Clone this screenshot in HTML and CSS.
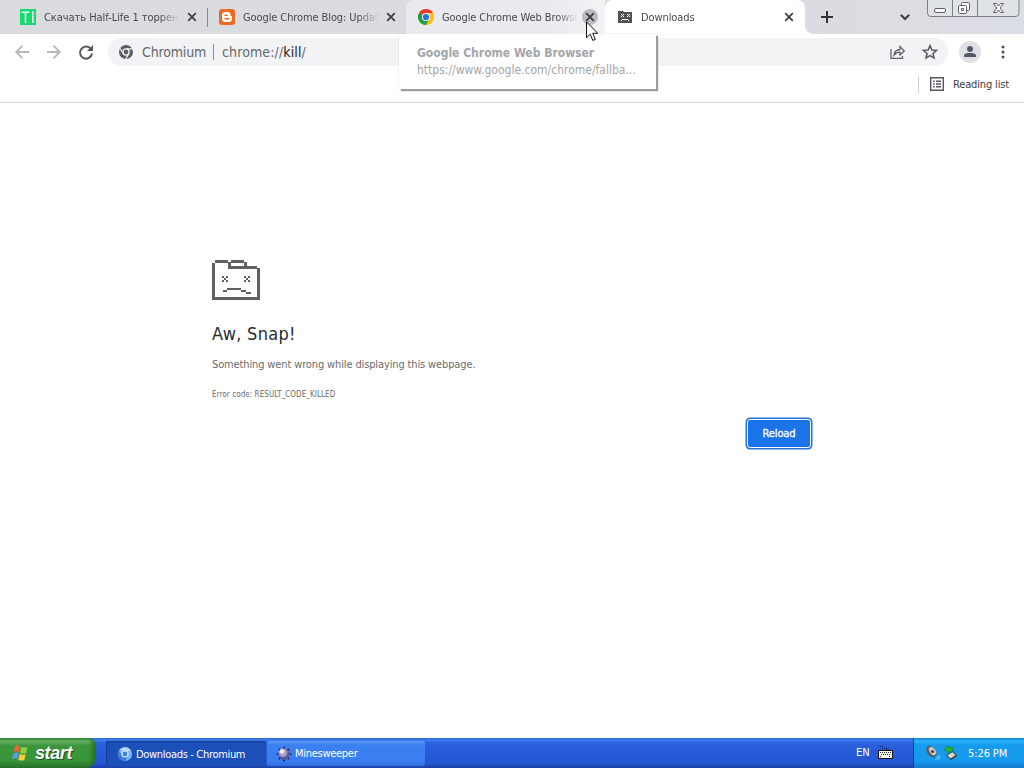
FILE: index.html
```html
<!DOCTYPE html>
<html lang="en">
<head>
<meta charset="utf-8">
<title>Downloads - Chromium</title>
<link rel="stylesheet" href="styles.css">
</head>
<body>
<header class="tabstrip">
  <div class="tab sep">
    <svg class="fav" viewBox="0 0 16 16"><path fill="#17d96f" d="M0 0h16v16H0z"/><path fill="none" stroke="#e9fff2" stroke-width="1.6" d="M1.500 3.200h8M5.500 3v11M12.800 2v12"/></svg>
    <span class="title t1">Скачать Half-Life 1 торрент</span>
    <svg class="x" viewBox="0 0 10 10"><path d="M1.200 1.200l7.600 7.600M8.800 1.200L1.200 8.800"/></svg>
  </div>
  <div class="tab">
    <svg class="fav" viewBox="0 0 16 16"><rect width="16" height="16" rx="3" fill="#ee6a1f"/><path fill="#fff" d="M6 3h2.500C10.500 3 11.500 4.300 11.500 6c0 .8.300 1 .8 1 .5 0 .7.300.7.800V10c0 2-1.200 3-3 3H6c-1.800 0-3-1.200-3-3V6c0-1.800 1.200-3 3-3z"/><path stroke="#ee6a1f" stroke-width="1.400" stroke-linecap="round" d="M6 6.200h2.200M6 9.800h4"/></svg>
    <span class="title t2">Google Chrome Blog: Update</span>
    <svg class="x" viewBox="0 0 10 10"><path d="M1.200 1.200l7.600 7.600M8.800 1.200L1.200 8.800"/></svg>
  </div>
  <div class="tab hover">
    <svg class="fav" viewBox="0 0 16 16"><circle cx="8" cy="8" r="8" fill="#fbc116"/><path fill="#e33b2e" d="M8 8L1.070 4A8 8 0 0 1 14.930 4z"/><path fill="#229b4b" d="M8 8L1.070 4A8 8 0 0 0 8 16l3.500-6z"/><path fill="#fbc116" d="M8 4h6.930A8 8 0 0 1 8 16l3.500-6z"/><circle cx="8" cy="8" r="4" fill="#fff"/><circle cx="8" cy="8" r="3.100" fill="#2b70e4"/></svg>
    <span class="title t3">Google Chrome Web Browser</span>
    <i class="disc"><svg class="x" viewBox="0 0 10 10"><path d="M1.200 1.200l7.600 7.600M8.800 1.200L1.200 8.800"/></svg></i>
    <svg class="cursor" viewBox="0 0 12 21"><path fill="#fff" stroke="#111" d="M.5.8v16l3.700-3.600 2.600 6.200 2.500-1-2.600-6.100h5z"/></svg>
  </div>
  <div class="tab active">
    <svg class="fav" viewBox="0 0 16 16"><path fill="#505357" d="M1 2h5l1 1h8v11H1z"/><path fill="#fff" d="M4 5h1v1H4zM6 5h1v1H6zM5 6h1v1H5zM4 7h1v1H4zM6 7h1v1H6zM10 5h1v1h-1zM12 5h1v1h-1zM11 6h1v1h-1zM10 7h1v1h-1zM12 7h1v1h-1zM5 10h6v1H5zM4 11h1v1H4zM11 11h1v1h-1z"/></svg>
    <span class="title t4">Downloads</span>
    <svg class="x" viewBox="0 0 10 10"><path d="M1.200 1.200l7.600 7.600M8.800 1.200L1.200 8.800"/></svg>
  </div>
  <svg class="plus" viewBox="0 0 12 12"><path d="M6 0v12M0 6h12"/></svg>
  <svg class="chev" viewBox="0 0 10 6"><path d="M.8.800L5 5 9.200.800"/></svg>
  <svg class="winbtns" viewBox="0 0 93 18"><path fill="#dfe2e7" stroke="#7b7e82" d="M.5-1v14q0 3.500 3.500 3.500h84.500q3.500 0 3.500-3.500V-1M25.500 0v16M50.500 0v16"/><g fill="#f5f6f8" stroke="#5f6266"><rect x="7.500" y="8.500" width="11" height="4" rx="1.500"/><path d="M34.500 3.500q0-1 1-1h6q1 0 1 1v6q0 1-1 1h-6q-1 0-1-1z"/><rect x="31.500" y="5.500" width="8" height="8" rx="1"/><path d="M34.500 8.500h2v2h-2zM66.500 3.500h3l2 2.500 2-2.500h3l-3.300 4.500 3.300 4.500h-3l-2-2.500-2 2.500h-3l3.300-4.500z"/></g></svg>
</header>

<nav class="toolbar">
  <svg class="nav back" viewBox="0 0 14 14"><path d="M14 7H1.500M7.500.7L1.200 7l6.300 6.300"/></svg>
  <svg class="nav fwd" viewBox="0 0 14 14"><path d="M0 7h12.500M6.500.7L12.800 7l-6.300 6.300"/></svg>
  <svg class="nav reload-i" viewBox="0 0 14 14"><path d="M12 4.200A6 6 0 1 0 13 8.500"/><path class="fill" d="M14 0v6H8z"/></svg>
  <div class="omnibox">
    <svg class="chip" viewBox="0 0 14 14"><circle cx="7" cy="7" r="7" fill="#5a5d61"/><circle cx="7" cy="7" r="3.100" fill="none" stroke="#f1f3f4" stroke-width="1.300"/><path stroke="#f1f3f4" stroke-width="1.200" d="M7 3.800h7M4.200 8.500L.9 3.200M9.800 8.600L6.700 14"/></svg>
    <span class="chiptext">Chromium</span>
    <span class="bar"></span>
    <span class="url">chrome://<b>kill</b>/</span>
    <svg class="share" viewBox="0 0 16 14"><path d="M1 4v9.300h11.500V11M4 10c.5-3.600 2.600-5.300 6-5.500V1.500L14.300 6 10 10V7.200C7.500 7.200 5.500 8 4 10z"/></svg>
    <svg class="star" viewBox="0 0 16 16"><path d="M8 1.600l1.850 4.350 4.700.4-3.550 3.100 1.050 4.600L8 11.600l-4.050 2.450L5 9.450l-3.550-3.100 4.700-.4z"/></svg>
  </div>
  <svg class="avatar" viewBox="0 0 22 22"><circle cx="11" cy="11" r="11" fill="#dfe1e6"/><circle cx="11" cy="8" r="3" fill="#505867"/><path fill="#505867" d="M5 16v-1.500C5 12.600 8.500 12 11 12s6 .6 6 2.500V16z"/></svg>
  <svg class="dots" viewBox="0 0 4 14"><circle cx="2" cy="2" r="1.500"/><circle cx="2" cy="7" r="1.500"/><circle cx="2" cy="12" r="1.500"/></svg>
  <aside class="tooltip"><strong>Google Chrome Web Browser</strong><span>https://www.google.com/chrome/fallba...</span></aside>
</nav>

<div class="bookmarks">
  <svg class="list" viewBox="0 0 14 14"><path d="M.7.700h12.600v12.600H.7zM3 4.200h1.700M6 4.200h5M3 7h1.700M6 7h5M3 9.800h1.700M6 9.800h5"/></svg>
  <span>Reading list</span>
</div>

<main class="page">
  <section class="error">
    <svg class="folder" viewBox="0 0 48 40" shape-rendering="crispEdges"><path d="M3 0h13v3H3zM0 3h3v37H0zM19 0h13v3H19zM16 2h3v4h-3zM32 2h3v4h-3zM16 6h29v3H16zM45 8h3v32h-3zM0 37h48v3H0zM15 28h14v2H15zM11 30h4v2h-4zM29 30h5v2h-5zM34 32h5v2h-5zM10 16h2v2h-2zM14 16h2v2h-2zM12 18h2v2h-2zM10 20h2v2h-2zM14 20h2v2h-2zM32 16h2v2h-2zM36 16h2v2h-2zM34 18h2v2h-2zM32 20h2v2h-2zM36 20h2v2h-2z"/></svg>
    <h1>Aw, Snap!</h1>
    <p>Something went wrong while displaying this webpage.</p>
    <small>Error code: RESULT_CODE_KILLED</small>
    <button>Reload</button>
  </section>
</main>

<footer class="taskbar">
  <div class="start">
    <svg class="flag" viewBox="0 0 18 18"><path fill="#ed6534" d="M4.200 2Q6.500.500 9 2L7.800 8Q5.500 6.500 2.800 8z"/><path fill="#8fd03c" d="M10.200 2.700Q13 4.300 16.500 3L15 9Q12 10.300 9 8.700z"/><path fill="#5b9bf3" d="M2.500 9.200Q5 7.800 7.600 9.200L6.300 15Q4 13.700 1 15z"/><path fill="#fbce35" d="M8.700 10Q11.500 11.500 14.700 10.200L13.300 16Q10.500 17.300 7.400 15.700z"/></svg>
    <span>start</span>
  </div>
  <div class="task on">
    <svg viewBox="0 0 14 14"><circle cx="7" cy="7" r="7" fill="#7db5f8"/><path fill="#3b7de0" d="M1 3.500A7 7 0 0 0 7 14l3-5L3.500 8z"/><path fill="#b9d9ff" d="M1.500 3A7 7 0 0 1 13 4H7z"/><circle cx="7" cy="7" r="3.500" fill="#dcecff"/><circle cx="7" cy="7" r="2.400" fill="#3f7fe2"/></svg>
    <span class="d">Downloads - Chromium</span>
  </div>
  <div class="task">
    <svg class="mine" viewBox="0 0 16 16"><path stroke="#25246f" stroke-width="1.600" d="M8 .5v15M.5 8h15M2.800 2.800l10.400 10.400M13.200 2.800L2.800 13.200"/><circle cx="8" cy="8" r="5.800" fill="#5a589c"/><circle cx="7" cy="6.800" r="4.300" fill="#a99fc4"/><circle cx="6" cy="5.500" r="2.300" fill="#f3e9ee"/></svg>
    <span class="m">Minesweeper</span>
  </div>
  <div class="lang"><span>EN</span>
    <svg viewBox="0 0 15 13"><path fill="none" stroke="#101a4c" stroke-dasharray="1 1" d="M2 .5h3M4 2.500h6M8 3.500h4"/><rect x=".5" y="4.500" width="14" height="8" fill="#f5f5ec" stroke="#111"/><path stroke="#222" stroke-dasharray="1 1" d="M2 6.500h11M3 8.500h10M2 10.500h2M11 10.500h2"/></svg>
  </div>
  <div class="tray">
    <svg class="spk" viewBox="0 0 17 16"><ellipse cx="6.500" cy="6.500" rx="4.500" ry="6.300" transform="rotate(-35 6.500 6.500)" fill="#555a60"/><ellipse cx="7.500" cy="6" rx="3" ry="4.600" transform="rotate(-35 7.500 6)" fill="#c8c9c6"/><circle cx="7.500" cy="6.500" r="1.600" fill="#4b4540"/><path fill="none" stroke="#8fcdf8" d="M10.500 14.500q2.500-1.500 3-4.500M12.500 15q2-1.500 2.500-4"/></svg>
    <svg class="usb" viewBox="0 0 14 16"><path fill="#3a4b55" d="M2 10l7-4 4.500 4.500-6.500 5z"/><path fill="#d8d9d2" d="M3.500 10.200l5-3 3 2.800-5 3.500z"/><path fill="#2db52d" stroke="#126d24" stroke-width=".5" d="M.5 4.500L4 .5l.5 2h4.500v3.500H5l-.5 2z"/></svg>
    <span>5:26 PM</span>
  </div>
</footer>
</body>
</html>
```
FILE: styles.css
```css
* { box-sizing: border-box; }
body {
  margin: 0;
  width: 1024px;
  height: 768px;
  overflow: hidden;
  display: flex;
  flex-direction: column;
  background: #fff;
  color: #45494d;
  font: 11px/16px "DejaVu Sans Condensed", "DejaVu Sans", sans-serif;
  font-stretch: condensed;
  white-space: nowrap;
}
svg { display: block; flex: none; overflow: visible; }

.tabstrip {
  height: 34px;
  flex: none;
  display: flex;
  align-items: center;
  padding-left: 8px;
  background: linear-gradient(90deg, #d9dbde, #dadce0 60%, #dadde3);
}
.tab {
  position: relative;
  width: 199px;
  height: 34px;
  display: flex;
  align-items: center;
  padding: 0 10px 0 12px;
}
.tab.sep::after {
  content: "";
  position: absolute;
  right: -1px;
  top: 8px;
  width: 1px;
  height: 19px;
  background: #85888c;
}
.tab.hover {
  background: linear-gradient(90deg, #e8eaed 70%, #f2f3f5);
  border-radius: 8px 0 0 0;
  padding-right: 8px;
  z-index: 10;
}
.tab.active { background: #fff; border-radius: 8px 8px 0 0; width: 200px; padding-right: 11px; }
.tab.active::after {
  content: "";
  position: absolute;
  left: 100%;
  bottom: 0;
  width: 8px;
  height: 8px;
  background: radial-gradient(circle at 100% 0, transparent 7.5px, #fff 8px);
}
.fav { width: 16px; height: 16px; }
.title {
  flex: 1;
  margin: 0 7px 0 8px;
  padding-top: 1px;
  overflow: hidden;
  letter-spacing: -.1px;
  -webkit-mask-image: linear-gradient(90deg, #000 84%, transparent);
  mask-image: linear-gradient(90deg, #000 84%, transparent);
}
.t1 { letter-spacing: -.05px; }
.hover .title { margin-right: 4px; }
.x { width: 10px; height: 10px; }
.x path { stroke: #3c3f43; stroke-width: 1.8; }
.disc {
  width: 16px;
  height: 16px;
  border-radius: 50%;
  background: #babcbf;
  display: grid;
  place-items: center;
}
.hover .disc { margin-right: -1px; }
.cursor { position: absolute; left: 180px; top: 21px; width: 12px; height: 21px; z-index: 6; }
.plus { width: 12px; height: 12px; margin-left: 16px; }
.plus path { stroke: #303337; stroke-width: 2; }
.chev { width: 10px; height: 6px; margin-left: 67px; }
.chev path { fill: none; stroke: #3b3e42; stroke-width: 2; }
.winbtns { width: 93px; height: 18px; margin-left: 17px; align-self: flex-start; }

.toolbar {
  position: relative;
  height: 36px;
  flex: none;
  display: flex;
  align-items: center;
  padding-left: 15px;
}
.nav { width: 14px; height: 14px; fill: none; stroke: #b5b7ba; stroke-width: 1.8; }
.fwd { margin-left: 18px; }
.reload-i { margin-left: 18px; stroke: #55585c; stroke-width: 2; }
.reload-i .fill { fill: #55585c; stroke: none; }
.omnibox {
  width: 840px;
  height: 28px;
  margin-left: 15px;
  padding: 0 10px 0 11px;
  border-radius: 14px;
  background: #f1f3f4;
  display: flex;
  align-items: center;
  font-size: 14px;
  color: #65696e;
}
.chip { width: 14px; height: 14px; }
.chiptext { width: 64px; margin-left: 9px; letter-spacing: -.15px; }
.bar { width: 1px; height: 16px; margin: 0 8px 0 7px; background: #8c8f93; }
.url { flex: 1; letter-spacing: .12px; }
.url b { font-weight: 400; color: #202124; }
.share { width: 16px; height: 14px; margin-right: 16px; fill: none; stroke: #5f6368; stroke-width: 1.3; }
.star { width: 16px; height: 16px; fill: none; stroke: #55585c; stroke-width: 1.5; }
.avatar { width: 22px; height: 22px; margin-left: 11px; }
.dots { width: 4px; height: 14px; margin-left: 20px; fill: #4c4f53; }
.tooltip {
  position: absolute;
  left: 399px;
  top: 0;
  z-index: 5;
  width: 257px;
  height: 55px;
  padding: 10px 18px;
  background: #fff;
  box-shadow: 0 0 1px #bbb, 2px 2px 1px #999;
  color: #a3a5a8;
  display: flex;
  flex-direction: column;
}
.tooltip strong { font-size: 12px; line-height: 18px; }
.tooltip span { font-size: 12px; line-height: 17px; }

.bookmarks {
  height: 33px;
  flex: none;
  border-bottom: 1px solid #d2d4d6;
  display: flex;
  justify-content: flex-end;
  align-items: flex-start;
  padding: 6px 15px 0 0;
}
.bookmarks::before { content: ""; width: 1px; height: 17px; margin-right: 11px; background: #ccced1; }
.list { width: 14px; height: 14px; margin: 1px 9px 0 0; fill: none; stroke: #55585c; stroke-width: 1.4; }
.bookmarks span { width: 56px; padding-top: 1px; letter-spacing: -.15px; color: #3c4043; }

.page { flex: 1; }
.error { width: 600px; margin: 157px 0 0 212px; display: flex; flex-direction: column; color: #6b6b6b; }
.folder { width: 48px; height: 40px; fill: #606060; }
h1 { margin: 21px 0 0; font-size: 18px; line-height: 26px; font-weight: 400; letter-spacing: .3px; color: #2a2b2e; }
.error p { margin: 10px 0 0; line-height: 16px; letter-spacing: -.13px; }
small { margin-top: 16px; font-size: 8px; line-height: 12px; letter-spacing: .06px; }
button {
  align-self: flex-end;
  width: 64px;
  height: 29px;
  margin: 18px 1px 0 0;
  padding: 0;
  border: 1px solid #fff;
  border-radius: 3px;
  background: #1a73e8;
  box-shadow: 0 0 0 1.5px #2473d8;
  color: #fff;
  font: inherit;
  letter-spacing: -.1px;
  -webkit-text-stroke: .3px #fff;
}

.taskbar {
  height: 30px;
  flex: none;
  display: flex;
  background: linear-gradient(#2c62d0 0, #3d80ee 2px, #2b61dc 5px, #2459d6 60%, #2558d0 85%, #1941a5);
  color: #fff;
}
.start {
  width: 96px;
  display: flex;
  align-items: center;
  padding-left: 11px;
  border-radius: 0 8px 10px 0;
  background: linear-gradient(90deg, transparent 92%, #226f22 100%), linear-gradient(#2e7b30 0, #63ad61 3px, #3c953c 8px, #38953a 75%, #246f26);
  font: italic bold 18px/24px "Liberation Sans", sans-serif;
  text-shadow: 1px 1px 1px #184c1a;
}
.flag { width: 18px; height: 18px; margin-right: 6px; }
.start span { letter-spacing: -.4px; }
.task {
  width: 158px;
  height: 25px;
  margin-top: 3px;
  padding-left: 9px;
  display: flex;
  align-items: center;
  border-radius: 2px;
  background: linear-gradient(#5a9af9, #3b80f0 4px, #3a7df0 80%, #2f6fde);
}
.task.on {
  width: 160px;
  margin-left: 10px;
  margin-right: 1px;
  padding: 1px 0 0 12px;
  background: #1d4fb8;
  box-shadow: inset 1px 1px 1px #153a8c;
}
.task svg { width: 14px; height: 14px; margin-right: 4px; }
.task .mine { width: 16px; height: 16px; margin-right: 3px; }
.d { letter-spacing: -.32px; padding-top: 1px; }
.m { letter-spacing: -.28px; }
.lang { margin-left: auto; width: 58px; display: flex; align-items: center; }
.lang span { width: 22px; padding-left: 1px; }
.lang svg { width: 15px; height: 13px; margin: 0 0 1px 1px; }
.tray {
  width: 111px;
  display: flex;
  align-items: center;
  padding-left: 11px;
  border-left: 1px solid #123f9a;
  background: linear-gradient(#1680d8 0, #29b3f7 3px, #159bee 7px, #159aed 75%, #1577cd);
}
.spk { width: 17px; height: 16px; }
.usb { width: 14px; height: 16px; margin: 0 10px 0 2px; }
.tray span { padding-top: 1px; letter-spacing: -.1px; }
```
